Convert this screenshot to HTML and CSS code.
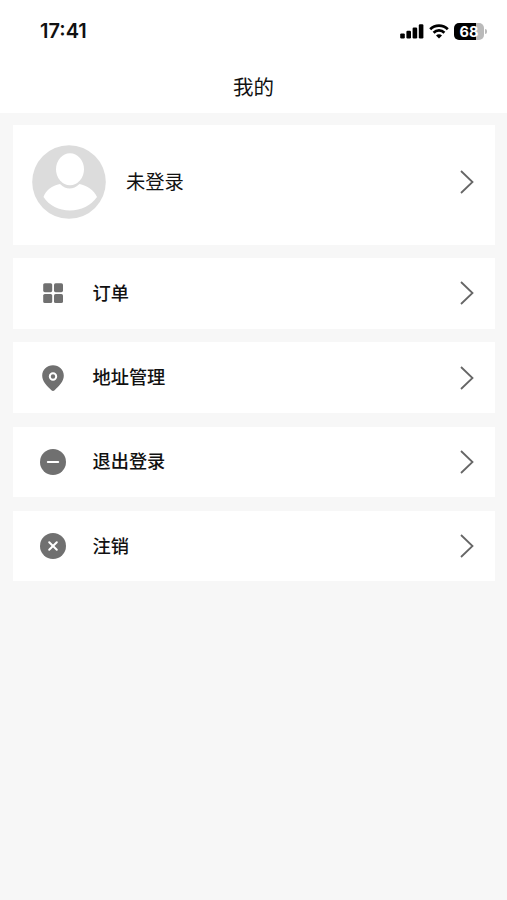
FILE: index.html
```html
<!DOCTYPE html>
<html lang="zh-CN">
<head>
    <meta charset="UTF-8">
    <meta name="viewport" content="width=device-width, initial-scale=1.0">
    <title>我的</title>
    <link rel="stylesheet" href="styles.css">
</head>
<body>
    <header class="header">
        <div class="status-bar">
            <span class="time">17:41</span>
            <div class="status-icons">
                <svg class="signal" width="24" height="16" viewBox="0 0 24 16">
                    <rect x="0.2" y="10.4" width="4.6" height="5" rx="1.2"/>
                    <rect x="6.4" y="7.8" width="4.6" height="7.6" rx="1.2"/>
                    <rect x="12.6" y="4.6" width="4.6" height="10.8" rx="1.2"/>
                    <rect x="18.8" y="1.2" width="4.6" height="14.2" rx="1.2"/>
                </svg>
                <svg class="wifi" width="20" height="16" viewBox="0 0 20 16">
                    <path d="M1.2 6.200a12.400 12.400 0 0 1 17.600 0M4.600 9.700a7.600 7.600 0 0 1 10.800 0" fill="none" stroke="#000" stroke-width="2.7"/>
                    <path d="M10 15.4l-3-3a4.2 4.2 0 0 1 6 0z"/>
                </svg>
                <div class="battery"><span>68</span></div>
            </div>
        </div>
        <h1 class="title">我的</h1>
    </header>

    <main class="content">
        <a class="card profile">
            <svg class="avatar" width="74" height="74" viewBox="0 0 74 74">
                <circle cx="37" cy="37" r="36.8" fill="#dcdcdc"/>
                <path d="M11.500 52C14 45 20 40.500 28 39Q37.500 48 47.500 39C55 40.500 62 45 65 52C59 60.500 49 65.500 38 65.500S17 60.500 11.500 52z" fill="#fff"/>
                <ellipse cx="38" cy="24.300" rx="14" ry="16" fill="#fff"/>
            </svg>
            <span class="name">未登录</span>
            <svg class="arrow" width="14" height="24" viewBox="0 0 14 24"><path d="M1 1l11.5 11L1 23"/></svg>
        </a>

        <a class="card item">
            <svg class="icon" width="28" height="28" viewBox="0 0 28 28">
                <rect x="4.2" y="4.2" width="9" height="9" rx="1.6"/>
                <rect x="15" y="4.2" width="9" height="9" rx="1.6"/>
                <rect x="4.2" y="15" width="9" height="9" rx="1.6"/>
                <rect x="15" y="15" width="9" height="9" rx="1.6"/>
            </svg>
            <span class="label">订单</span>
            <svg class="arrow" width="14" height="24" viewBox="0 0 14 24"><path d="M1 1l11.5 11L1 23"/></svg>
        </a>

        <a class="card item">
            <svg class="icon" width="28" height="28" viewBox="0 0 28 28">
                <path d="M14 1.2c6 0 10.8 4.6 10.8 10.5 0 5.6-4.8 10.2-9.2 14.5q-1.6 1.4-3.2 0C8 21.9 3.2 17.3 3.2 11.7 3.2 5.8 8 1.2 14 1.2z"/>
                <circle class="line" cx="14" cy="12.5" r="3.2"/>
            </svg>
            <span class="label">地址管理</span>
            <svg class="arrow" width="14" height="24" viewBox="0 0 14 24"><path d="M1 1l11.5 11L1 23"/></svg>
        </a>

        <a class="card item">
            <svg class="icon" width="28" height="28" viewBox="0 0 28 28">
                <circle cx="14" cy="14" r="13"/>
                <path class="line" d="M8.8 14h10.4"/>
            </svg>
            <span class="label">退出登录</span>
            <svg class="arrow" width="14" height="24" viewBox="0 0 14 24"><path d="M1 1l11.5 11L1 23"/></svg>
        </a>

        <a class="card item">
            <svg class="icon" width="28" height="28" viewBox="0 0 28 28">
                <circle cx="14" cy="14" r="13"/>
                <path class="line" d="M10.2 10.2l7.6 7.6M17.8 10.2l-7.6 7.6"/>
            </svg>
            <span class="label">注销</span>
            <svg class="arrow" width="14" height="24" viewBox="0 0 14 24"><path d="M1 1l11.5 11L1 23"/></svg>
        </a>
    </main>
</body>
</html>
```
FILE: styles.css
```css
* {
    box-sizing: border-box;
}

body {
    margin: 0;
    min-height: 100vh;
    background: #f7f7f7;
    color: #111;
    font-family: "Noto Sans CJK SC", sans-serif;
}

.header {
    height: 113px;
    background: #fff;
}

.status-bar {
    display: flex;
    justify-content: space-between;
    align-items: center;
    height: 62px;
    padding: 0 23px 0 40px;
}

.time {
    font-family: Inter, sans-serif;
    font-size: 20px;
    font-weight: 600;
}

.status-icons {
    display: flex;
    align-items: center;
    gap: 5px;
}

.battery {
    position: relative;
    width: 30px;
    height: 17px;
    border-radius: 5px;
    background: linear-gradient(to right, #000 72%, #bababa 72%);
    color: #fff;
    font: 700 14.5px/17px Inter, sans-serif;
    text-align: center;
}

.battery::after {
    content: "";
    position: absolute;
    right: -3px;
    top: 6px;
    width: 2px;
    height: 5px;
    border-radius: 0 2px 2px 0;
    background: #bababa;
}

.title {
    margin: 0;
    font-size: 20.5px;
    font-weight: 400;
    line-height: 48px;
    text-align: center;
}

.content {
    display: flex;
    flex-direction: column;
    gap: 13.8px;
    padding: 12px 12.5px 0 13px;
}

.card {
    display: flex;
    align-items: center;
    background: #fff;
}

.profile {
    height: 119.5px;
    padding: 0 21px 6px 19px;
}

.name {
    margin-left: 20px;
    padding-bottom: 2px;
    font-size: 19.3px;
}

.item {
    height: 70.4px;
    padding: 0 21px 0 26px;
}

.label {
    margin-left: 25.5px;
    padding-bottom: 3px;
    font-size: 18.2px;
    font-weight: 500;
}

.icon {
    fill: #707070;
}

.icon .line {
    fill: none;
    stroke: #fff;
    stroke-width: 2;
    stroke-linecap: round;
}

.arrow {
    margin-left: auto;
    fill: none;
    stroke: #666;
    stroke-width: 1.8;
}
```
